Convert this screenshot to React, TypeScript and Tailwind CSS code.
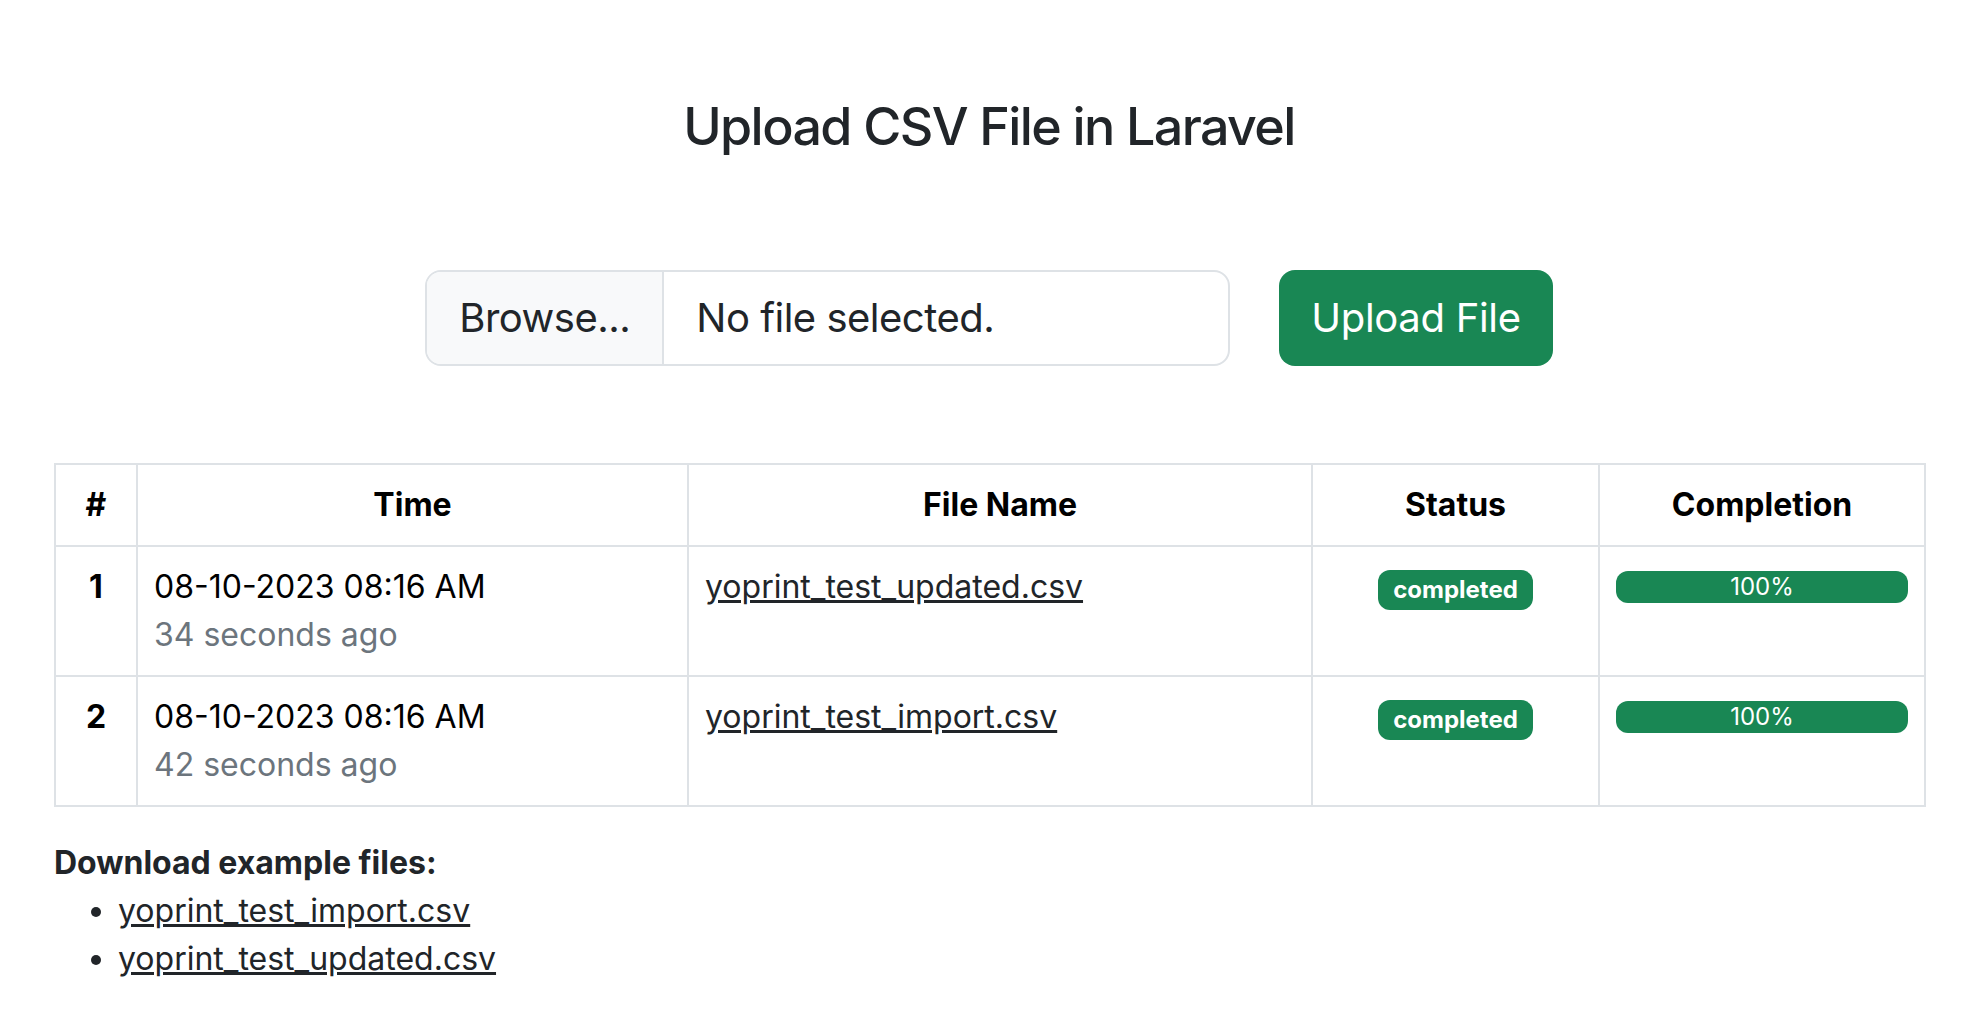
import React from 'react';

const uploads = [
  { id: 1, time: '08-10-2023 08:16 AM', ago: '34 seconds ago', file: 'yoprint_test_updated.csv', status: 'completed', progress: 100 },
  { id: 2, time: '08-10-2023 08:16 AM', ago: '42 seconds ago', file: 'yoprint_test_import.csv', status: 'completed', progress: 100 },
];

const App: React.FC = () => {
  return (
    <div className="min-h-screen bg-white font-['Inter','Noto_Sans',sans-serif] text-[#212529]">
      <div className="px-[54px] pt-[95px] pb-10">
        <h3 className="text-center text-[52px] leading-[64px] font-medium tracking-[-1.6px] text-[#212529]">Upload CSV File in Laravel</h3>

        <form className="mt-[111px] flex justify-center items-stretch gap-[49px]">
          <label className="flex w-[805px] h-[96px] border-2 border-[#dee2e6] rounded-2xl overflow-hidden text-[40px] leading-[60px] tracking-[-0.5px] cursor-pointer">
            <span className="flex items-center bg-[#f8f9fa] px-[32px] border-r-2 border-[#dee2e6]">Browse...</span>
            <span className="flex items-center px-[32px]">No file selected.</span>
            <input type="file" className="hidden" />
          </label>
          <button type="button" className="h-[96px] px-[32px] rounded-2xl bg-[#198754] text-white text-[40px] leading-[60px] tracking-[-0.3px]">
            Upload File
          </button>
        </form>

        <table className="mt-[97px] w-full table-fixed border-collapse text-[32px] leading-[48px] text-black">
          <colgroup>
            <col className="w-[82px]" />
            <col className="w-[551px]" />
            <col className="w-[624px]" />
            <col className="w-[287px]" />
            <col className="w-[326px]" />
          </colgroup>
          <thead>
            <tr>
              <th className="border-2 border-[#dee2e6] p-4 font-bold text-center">#</th>
              <th className="border-2 border-[#dee2e6] p-4 font-bold text-center">Time</th>
              <th className="border-2 border-[#dee2e6] p-4 font-bold text-center">File Name</th>
              <th className="border-2 border-[#dee2e6] p-4 font-bold text-center">Status</th>
              <th className="border-2 border-[#dee2e6] p-4 font-bold text-center">Completion</th>
            </tr>
          </thead>
          <tbody>
            {uploads.map((u) => (
              <tr key={u.id}>
                <th className="border-2 border-[#dee2e6] p-4 font-bold text-center align-top">{u.id}</th>
                <td className="border-2 border-[#dee2e6] p-4 align-top">
                  <div>{u.time}</div>
                  <div className="text-[#6c757d]">{u.ago}</div>
                </td>
                <td className="border-2 border-[#dee2e6] p-4 align-top">
                  <a href="#" className="underline text-[#212529]">{u.file}</a>
                </td>
                <td className="border-2 border-[#dee2e6] p-4 align-top text-center">
                  <span className="inline-block rounded-xl bg-[#198754] px-[15.6px] py-[8.4px] text-[24px] leading-none font-bold text-white">
                    {u.status}
                  </span>
                </td>
                <td className="border-2 border-[#dee2e6] p-4 align-top">
                  <div className="mt-2 h-8 rounded-xl bg-[#e9ecef] overflow-hidden flex">
                    <div
                      className="h-full bg-[#198754] text-white text-[24px] leading-8 text-center"
                      style={{ width: `${u.progress}%` }}
                    >
                      {u.progress}%
                    </div>
                  </div>
                </td>
              </tr>
            ))}
          </tbody>
        </table>

        <div className="mt-8 text-[32px] leading-[48px]">
          <strong className="font-bold">Download example files:</strong>
          <ul className="list-disc pl-[64px]">
            <li>
              <a href="#" className="underline text-[#212529]">yoprint_test_import.csv</a>
            </li>
            <li>
              <a href="#" className="underline text-[#212529]">yoprint_test_updated.csv</a>
            </li>
          </ul>
        </div>
      </div>
    </div>
  );
};

export default App;
